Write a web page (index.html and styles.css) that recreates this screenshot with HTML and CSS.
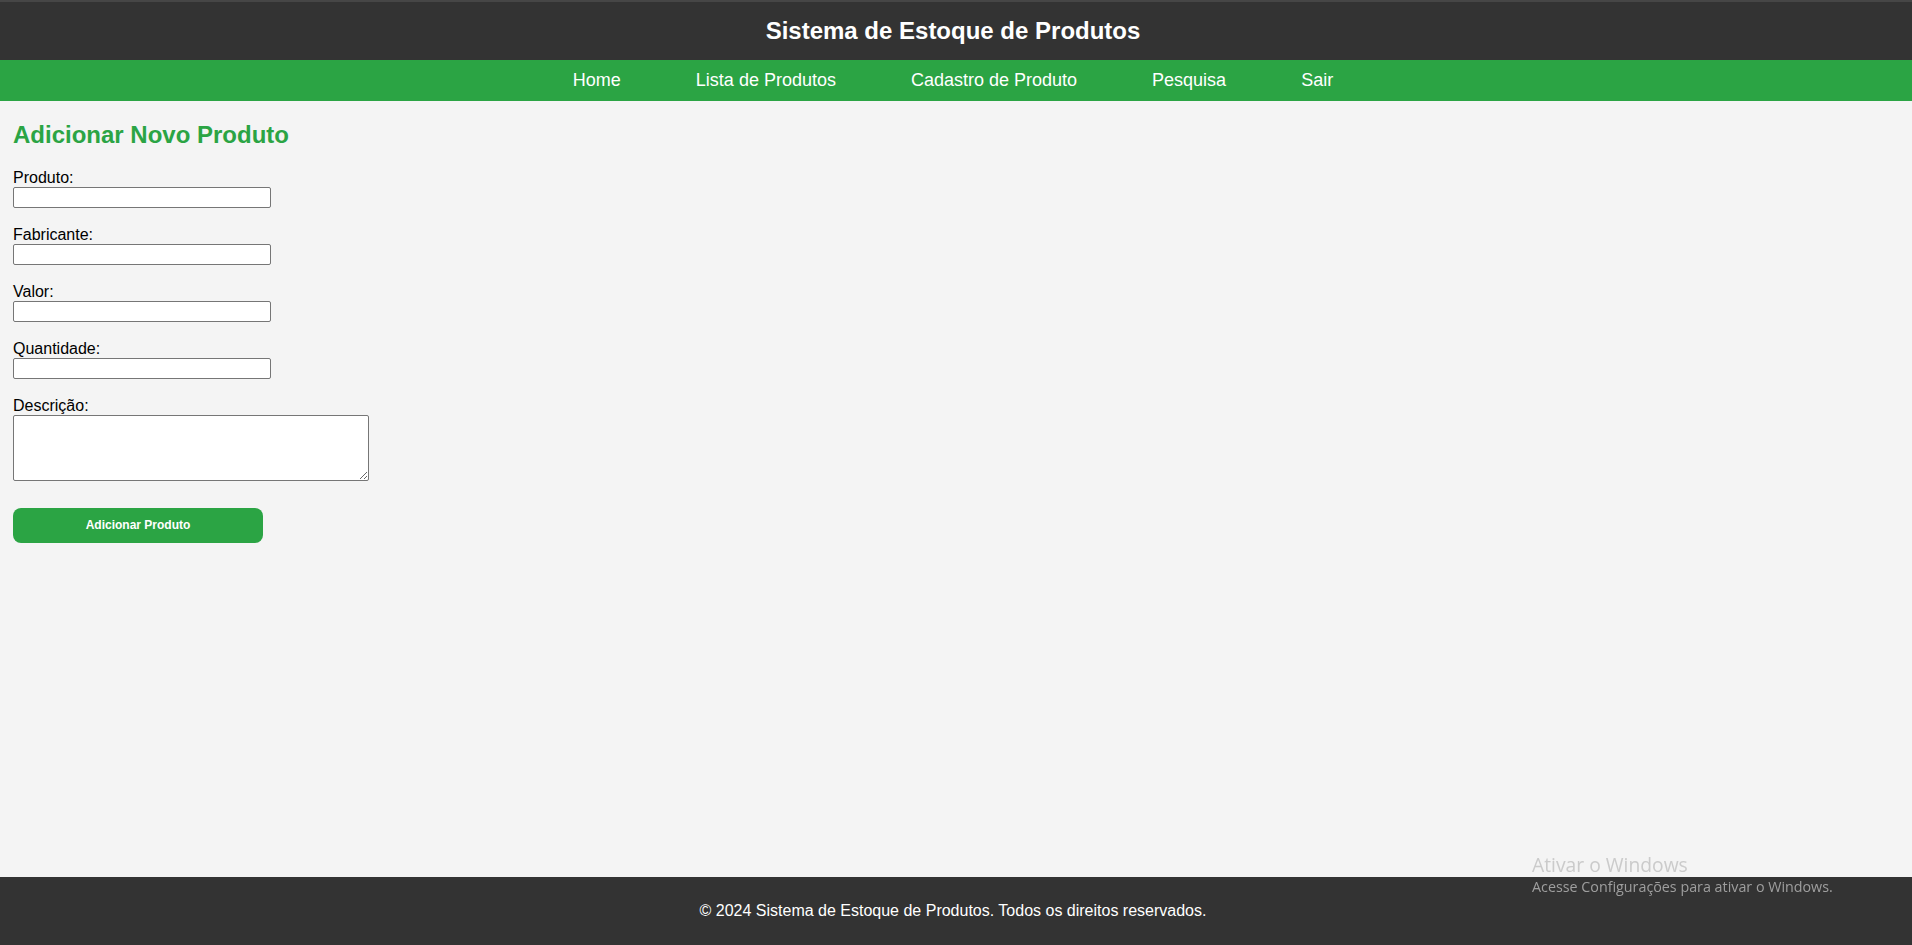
FILE: index.html
```html
<!DOCTYPE html>
<html lang="pt-BR">
<head>
<meta charset="utf-8">
<title>Sistema de Estoque de Produtos</title>
<link rel="stylesheet" href="styles.css">
</head>
<body>
<header class="site-header">
  <h1 class="site-title">Sistema de Estoque de Produtos</h1>
</header>
<nav class="site-nav">
  <a href="#" class="nav-link">Home</a>
  <a href="#" class="nav-link">Lista de Produtos</a>
  <a href="#" class="nav-link">Cadastro de Produto</a>
  <a href="#" class="nav-link">Pesquisa</a>
  <a href="#" class="nav-link">Sair</a>
</nav>
<main class="content">
  <h2 class="page-title">Adicionar Novo Produto</h2>
  <form class="product-form">
    <label class="field-label" for="produto">Produto:</label>
    <input class="field-input" type="text" id="produto">
    <label class="field-label" for="fabricante">Fabricante:</label>
    <input class="field-input" type="text" id="fabricante">
    <label class="field-label" for="valor">Valor:</label>
    <input class="field-input" type="text" id="valor">
    <label class="field-label" for="quantidade">Quantidade:</label>
    <input class="field-input" type="text" id="quantidade">
    <label class="field-label" for="descricao">Descrição:</label>
    <textarea class="field-textarea" id="descricao"></textarea>
    <button class="submit-btn" type="button">Adicionar Produto</button>
  </form>
</main>
<footer class="site-footer">
  <p class="footer-text">© 2024 Sistema de Estoque de Produtos. Todos os direitos reservados.</p>
</footer>
<div class="win-watermark">
  <div class="win-title">Ativar o Windows</div>
  <div class="win-sub">Acesse Configurações para ativar o Windows.</div>
</div>
</body>
</html>
```

FILE: styles.css
```css
* { box-sizing: border-box; }

html, body {
  margin: 0;
  padding: 0;
}

body {
  font-family: "Liberation Sans", Arial, sans-serif;
  background: #f4f4f4;
  color: #000;
  min-height: 100vh;
  display: flex;
  flex-direction: column;
}

.site-header {
  background: #333333;
  border-top: 2px solid #464646;
  padding: 15px 6px 15px 0;
  text-align: center;
}

.site-title {
  margin: 0;
  color: #ffffff;
  font-size: 24px;
  line-height: 28px;
  font-weight: bold;
}

.site-nav {
  background: #2ba444;
  display: flex;
  justify-content: center;
  gap: 75px;
  padding: 10px 6px 10px 0;
}

.nav-link {
  color: #ffffff;
  text-decoration: none;
  font-size: 18px;
  line-height: 21px;
}

.content {
  flex: 1;
  padding: 0 13px;
}

.page-title {
  color: #2ba444;
  font-size: 24px;
  line-height: 27.6px;
  font-weight: bold;
  margin: 20px 0 19px;
}

.product-form {
  display: flex;
  flex-direction: column;
  align-items: flex-start;
}

.field-label {
  display: block;
  font-size: 16px;
  line-height: 19px;
}

.field-input {
  display: block;
  width: 258px;
  height: 21px;
  margin: 0 0 17px;
  padding: 1px 2px;
  border: 1px solid #767676;
  border-radius: 2px;
  background: #ffffff;
  font-family: "Liberation Sans", Arial, sans-serif;
  font-size: 13px;
}

.field-textarea {
  display: block;
  width: 356px;
  height: 66px;
  margin: 0 0 27px;
  padding: 2px;
  border: 1px solid #767676;
  border-radius: 2px;
  background: #ffffff;
  font-family: "Liberation Mono", monospace;
  font-size: 13px;
}

.submit-btn {
  display: block;
  width: 250px;
  height: 35px;
  border: none;
  border-radius: 8px;
  background: #2ba444;
  color: #ffffff;
  font-family: "Liberation Sans", Arial, sans-serif;
  font-size: 12px;
  font-weight: bold;
  cursor: pointer;
}

.site-footer {
  background: #333333;
  padding: 25px 6px 25px 0;
  text-align: center;
}

.footer-text {
  margin: 0;
  color: #ffffff;
  font-size: 16px;
  line-height: 18.4px;
}

.win-watermark {
  position: fixed;
  left: 1532px;
  top: 851px;
  font-family: "Open Sans", "Noto Sans", sans-serif;
  pointer-events: none;
}

.win-title {
  font-size: 19.3px;
  line-height: 27px;
  color: rgba(200, 200, 200, 0.95);
}

.win-sub {
  font-size: 14.3px;
  line-height: 18px;
  color: rgba(170, 170, 170, 0.9);
  white-space: nowrap;
}
```
